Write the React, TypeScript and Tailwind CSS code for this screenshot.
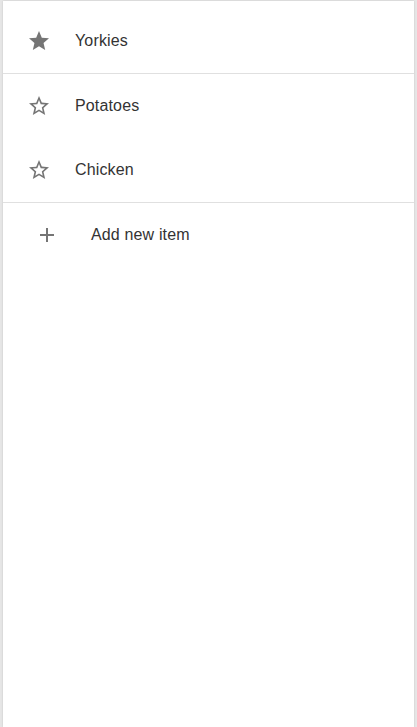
import React from 'react';

const StarIcon: React.FC<{ filled?: boolean }> = ({ filled }) => (
  <svg viewBox="0 0 24 24" className="h-6 w-6 fill-[#757575]">
    {filled ? (
      <path d="M12 17.27L18.18 21l-1.64-7.03L22 9.24l-7.19-.61L12 2 9.19 8.63 2 9.24l5.46 4.73L5.82 21z" />
    ) : (
      <path d="M22 9.24l-7.19-.62L12 2 9.19 8.63 2 9.24l5.46 4.73L5.82 21 12 17.27 18.18 21l-1.63-7.03L22 9.24zM12 15.4l-3.76 2.27 1-4.28-3.32-2.88 4.38-.38L12 6.1l1.71 4.04 4.38.38-3.32 2.88 1 4.28L12 15.4z" />
    )}
  </svg>
);

const PlusIcon: React.FC = () => (
  <svg viewBox="0 0 24 24" className="h-6 w-6 fill-[#757575]">
    <path d="M19 13h-6v6h-2v-6H5v-2h6V5h2v6h6v2z" />
  </svg>
);

const Row: React.FC<{ label: string; favorite?: boolean }> = ({ label, favorite }) => (
  <div className="flex h-16 items-center gap-6 pl-6">
    <StarIcon filled={favorite} />
    <span className="text-base tracking-[0.009375em] text-[#333333]">{label}</span>
  </div>
);

const App: React.FC = () => {
  return (
    <div className="min-h-screen bg-[#e6e6e6] px-[3px] pt-px font-['Liberation_Sans',Arial,sans-serif]">
      <div className="min-h-[726px] bg-white shadow-[0_0_2px_rgba(0,0,0,0.15)]">
        <div className="pt-2">
          <Row label="Yorkies" favorite />
        </div>
        <div className="border-t border-[#e0e0e0]">
          <Row label="Potatoes" />
          <Row label="Chicken" />
        </div>
        <div className="border-t border-[#e0e0e0]">
          <button className="flex h-16 w-full items-center gap-8 pl-8 text-left">
            <PlusIcon />
            <span className="text-base tracking-[0.009375em] text-[#333333]">Add new item</span>
          </button>
        </div>
      </div>
    </div>
  );
};

export default App;
